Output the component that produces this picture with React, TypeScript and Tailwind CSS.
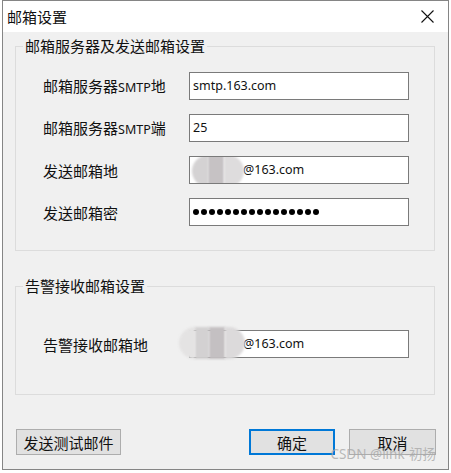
import React from "react";

const cjk = { fontFamily: '"Noto Sans CJK SC", "Noto Sans", sans-serif' };
const latin = { fontFamily: '"Noto Sans", "Noto Sans CJK SC", sans-serif' };

const Field = ({ label, children }: { label: React.ReactNode; children: React.ReactNode }) => (
  <div className="flex items-center h-[28px]">
    <div className="w-[146px] text-[15px] leading-none text-[#111]">{label}</div>
    <div className="relative w-[220px] h-[28px] bg-white border border-[#7a7a7a] flex items-center pl-[3px] overflow-hidden">
      {children}
    </div>
  </div>
);

const Smtp = () => (
  <span className="text-[12.5px]" style={latin}>
    SMTP
  </span>
);

const Blur = ({ left }: { left: number }) => (
  <div className="absolute top-[-2px] flex" style={{ left }}>
    <div className="w-[16px] h-[32px] bg-[#d4d2d3] blur-[1px] rounded-l-full" />
    <div className="w-[16px] h-[32px] bg-[#c6c2c4] blur-[1px]" />
    <div className="w-[20px] h-[32px] bg-[#dedcdd] blur-[1px] rounded-r-full" />
  </div>
);

export default function App() {
  return (
    <div className="w-[451px] h-[473px] bg-white" style={cjk}>
      <div className="ml-[2px] w-[447px] h-[470px] border border-[#858585] bg-[#f0f0f0] flex flex-col">
        {/* title bar */}
        <div className="h-[31px] bg-white flex items-center justify-between pl-[4px] pr-[14px]">
          <span className="text-[15px] text-[#111] leading-none">邮箱设置</span>
          <svg width="13" height="13" viewBox="0 0 13 13">
            <path d="M0.5 0.5 L12.5 12.5 M12.5 0.5 L0.5 12.5" stroke="#111" strokeWidth="1.1" />
          </svg>
        </div>

        <div className="relative flex-1 pl-[12px] flex flex-col">
          {/* group 1 */}
          <div className="relative mt-[14px] w-[420px] h-[205px] border border-[#dcdcdc] pt-[25px] pl-[27px] flex flex-col gap-[14px]">
            <span className="absolute -top-[10px] left-[7px] px-[2px] bg-[#f0f0f0] text-[15px] leading-[18px] text-[#111]">
              邮箱服务器及发送邮箱设置
            </span>
            <Field label={<>邮箱服务器<Smtp />地</>}>
              <span className="text-[12.5px] text-[#111]" style={latin}>smtp.163.com</span>
            </Field>
            <Field label={<>邮箱服务器<Smtp />端</>}>
              <span className="text-[12.5px] text-[#111]" style={latin}>25</span>
            </Field>
            <Field label="发送邮箱地">
              <Blur left={2} />
              <span className="ml-[50px] text-[12.5px] text-[#111]" style={latin}>@163.com</span>
            </Field>
            <Field label="发送邮箱密">
              <div className="flex gap-[2px]">
                {Array.from({ length: 16 }).map((_, i) => (
                  <div key={i} className="w-[6px] h-[6px] rounded-full bg-black" />
                ))}
              </div>
            </Field>
          </div>

          {/* group 2 */}
          <div className="relative mt-[35px] w-[420px] h-[109px] border border-[#dcdcdc] pt-[43px] pl-[27px]">
            <span className="absolute -top-[10px] left-[7px] px-[2px] bg-[#f0f0f0] text-[15px] leading-[18px] text-[#111]">
              告警接收邮箱设置
            </span>
            <Field label="告警接收邮箱地">
              <span className="ml-[50px] text-[12.5px] text-[#111]" style={latin}>@163.com</span>
            </Field>
            <div className="absolute left-[163px] top-[40px] flex">
              <div className="w-[16px] h-[32px] bg-[#e4e3e3] blur-[1px] rounded-l-full" />
              <div className="w-[14px] h-[32px] bg-[#d3d1d2] blur-[1px]" />
              <div className="w-[16px] h-[32px] bg-[#c4c0c2] blur-[1px]" />
              <div className="w-[20px] h-[32px] bg-[#dcdadb] blur-[1px] rounded-r-full" />
            </div>
          </div>

          {/* buttons */}
          <div className="mt-[34px] flex items-center">
            <button className="ml-[1px] w-[105px] h-[26px] bg-[#e1e1e1] border border-[#adadad] text-[15px] leading-none text-[#111]">
              发送测试邮件
            </button>
            <button className="ml-[128px] w-[86px] h-[26px] bg-[#e1e1e1] border-2 border-[#0078d7] text-[15px] leading-none text-[#111]">
              确定
            </button>
            <button className="ml-[14px] w-[87px] h-[26px] bg-[#e1e1e1] border border-[#adadad] text-[15px] leading-none text-[#111]">
              取消
            </button>
          </div>

          {/* watermark */}
          <span className="absolute right-[12px] bottom-[8px] text-[13.5px] leading-none text-[#a8a8a8]/80" style={latin}>
            CSDN @link-初扬
          </span>
        </div>
      </div>
    </div>
  );
}
